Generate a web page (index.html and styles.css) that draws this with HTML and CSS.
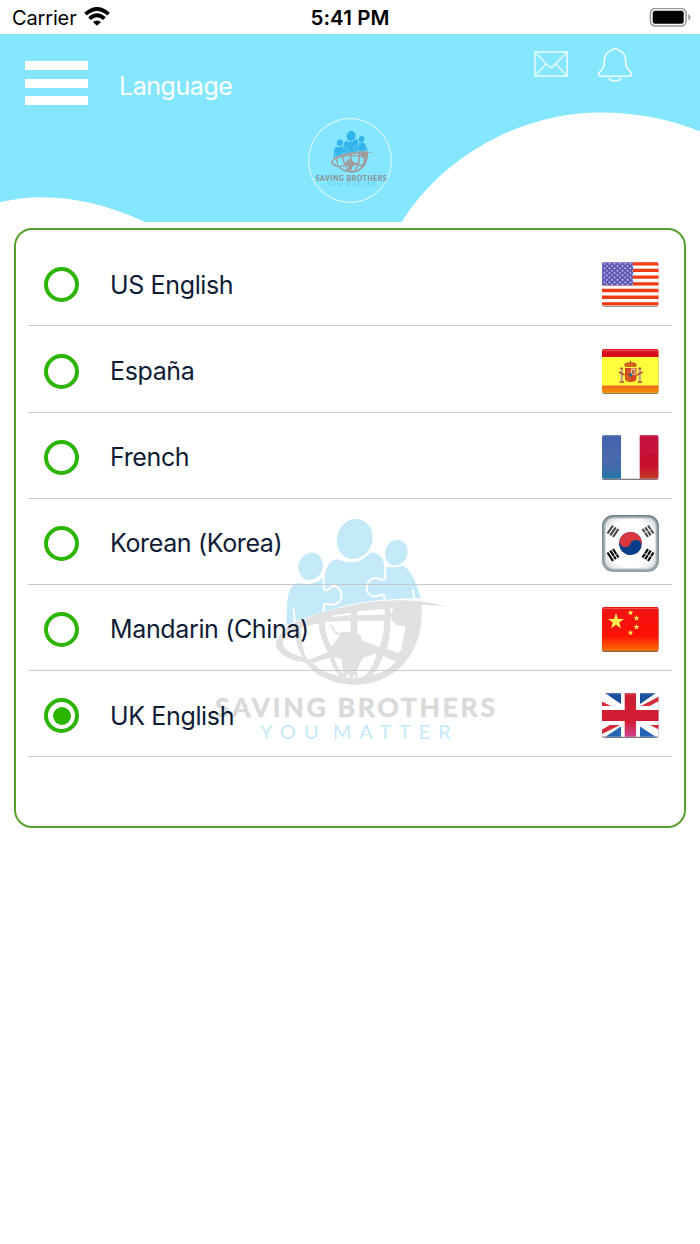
FILE: index.html
```html
<!DOCTYPE html>
<html lang="en">
<head>
<meta charset="utf-8">
<title>Language</title>
<link rel="stylesheet" href="styles.css">
</head>
<body>
<svg class="defs" width="0" height="0" aria-hidden="true">
  <defs>
    <symbol id="logo" viewBox="0 0 930 780">
      <g class="logo-blue">
        <ellipse cx="464" cy="117" rx="53" ry="61" transform="rotate(18 464 117)"/>
        <ellipse cx="332" cy="199" rx="36" ry="42" transform="rotate(20 332 199)"/>
        <ellipse cx="589" cy="158" rx="33" ry="39" transform="rotate(20 589 158)"/>
        <path d="M371 250C373 205 388 180 412 178Q465 205 512 158C540 155 556 180 553 215V299Q460 305 371 335Z"/>
        <path d="M260 376C258 270 272 250 300 250Q338 258 369 234V268C385 280 385 258 402 258C432 264 432 308 402 314C386 316 374 304 371 318V336Q310 352 260 376Z"/>
        <path d="M662 295C650 245 632 210 610 198Q585 204 557 200V237C540 246 538 230 520 235C494 242 494 286 520 289C538 292 540 278 553 286V300Q610 294 662 295Z"/>
      </g>
      <path class="logo-cut" d="M371 222V268C385 280 385 258 402 258C432 264 432 308 402 314C386 316 374 304 371 318V338M556 185V237C540 246 538 230 520 235C494 242 494 286 520 289C538 292 540 278 553 286V304M280 325L285 368M638 268L644 298"/>
      <path class="logo-grey" d="M285 368C420 310 590 280 737 318Q700 315 664 315C676 440 600 554 465 554C395 554 346 525 317 488C260 480 228 456 228 432C228 410 250 398 258 380Z"/>
      <g class="logo-hole">
        <path d="M258 408Q268 396 287 391Q284 430 308 472C252 456 236 430 258 408Z"/>
        <path d="M303 384Q330 375 355 370Q361 420 384 457L324 481Q298 440 303 384Z"/>
        <path d="M393 347L452 338V345L400 351ZM472 334L554 327V344L472 346ZM571 323L580 322L573 345Z"/>
        <path d="M374 365L452 362V399Q430 390 418 400L402 393Q410 385 388 372L397 386L402 400L420 406Q408 425 394 440Q376 408 374 365Z"/>
        <path d="M472 362H553Q552 405 539 442L484 421Q487 405 472 400Z"/>
        <path d="M572 350Q580 380 612 378Q620 385 610 412L604 450L594 460L560 447Q571 420 572 350Z"/>
        <path d="M338 489L388 473Q398 503 418 528Q365 519 338 489Z"/>
        <path d="M402 470L424 477L431 522Q411 505 402 470ZM470 513Q482 482 492 472L530 460Q522 500 495 527L474 534Z"/>
        <path d="M549 468L588 485Q562 515 517 525Q540 500 549 468ZM437 532L447 519L450 535ZM461 520L468 535H459Z"/>
      </g>
      <text class="logo-name" x="45" y="650" textLength="840">SAVING BROTHERS</text>
      <text class="logo-tag" x="180" y="717" textLength="176" lengthAdjust="spacing">YOU</text>
      <text class="logo-tag" x="398" y="717" textLength="354" lengthAdjust="spacing">MATTER</text>
    </symbol>
    <linearGradient id="cn-red" x1="0" y1="0" x2="0" y2="1">
      <stop offset="0" stop-color="#f01414"/><stop offset=".65" stop-color="#fe1005"/><stop offset="1" stop-color="#fb7200"/>
    </linearGradient>
    <linearGradient id="es-base" x1="0" y1="0" x2="0" y2="1">
      <stop offset="0" stop-color="#ed6a1c"/><stop offset="1" stop-color="#f49200"/>
    </linearGradient>
    <linearGradient id="fr-blue" x1="0" y1="0" x2="0" y2="1">
      <stop offset="0" stop-color="#3a5ca6"/><stop offset=".7" stop-color="#4468ac"/><stop offset="1" stop-color="#2478a8"/>
    </linearGradient>
    <linearGradient id="fr-red" x1="0" y1="0" x2="0" y2="1">
      <stop offset="0" stop-color="#c00838"/><stop offset=".7" stop-color="#c8102e"/><stop offset="1" stop-color="#c03c28"/>
    </linearGradient>
    <linearGradient id="uk-red" x1="0" y1="0" x2="0" y2="1">
      <stop offset="0" stop-color="#cc1f30"/><stop offset=".65" stop-color="#d41c34"/><stop offset="1" stop-color="#cc4490"/>
    </linearGradient>
    <radialGradient id="kr-face" cx=".5" cy=".5" r=".68">
      <stop offset=".7" stop-color="#fff"/><stop offset="1" stop-color="#cfd6d9"/>
    </radialGradient>
    <linearGradient id="kr-rim" x1="0" y1="0" x2="0" y2="1">
      <stop offset="0" stop-color="#6e8088"/><stop offset="1" stop-color="#98a5aa"/>
    </linearGradient>
    <pattern id="stars" width="5.200" height="4.600" patternUnits="userSpaceOnUse" x="1" y=".5">
      <circle cx="1.300" cy="1.200" r=".85" fill="#e4e2fc"/><circle cx="3.900" cy="3.500" r=".85" fill="#e4e2fc"/>
    </pattern>
    <clipPath id="flag-clip"><rect width="56.500" height="43.800" rx="2"/></clipPath>
    <path id="star" d="M0-8L1.9-2.5H7.7L3.1 1L4.8 6.6L0 3.2L-4.8 6.6L-3.1 1L-7.7-2.5H-1.9Z"/>
  </defs>
</svg>

<div class="status">
  <div class="status-left">
    <span class="carrier">Carrier</span>
    <svg class="wifi" viewBox="0 0 26 19" width="26" height="19">
      <g fill="none" stroke="#000" stroke-width="3.800">
        <path d="M1.500 7.200Q13-3.200 24.500 7.200"/>
        <path d="M5.500 11.600Q13 4.900 20.500 11.600"/>
      </g>
      <path d="M13 18.800L8.900 15.100Q13 11.700 17.100 15.100Z"/>
    </svg>
  </div>
  <span class="clock">5:41 PM</span>
  <svg class="battery" viewBox="0 0 42 20" width="42" height="20">
    <rect x="1.400" y=".5" width="35.700" height="17.600" rx="5" fill="#fff" stroke="#999" stroke-width="1.500"/>
    <rect x="3.700" y="2.800" width="31" height="13" rx="2.500"/>
    <path d="M39.300 6.100Q41.500 7.100 41.500 9.300T39.300 12.600Z" fill="#999"/>
  </svg>
</div>

<header class="header">
  <svg class="waves" viewBox="0 34 700 188" width="700" height="188">
    <path fill="#fff" d="M0 202.300C42 191.500 93 197.500 144 221.500V222H0ZM402 221.500C445 153 525 112.500 600 112.500C636 112.500 670 119 700 131.500V222H402Z"/>
  </svg>
  <div class="menu"><i></i><i></i><i></i></div>
  <h1 class="title">Language</h1>
  <div class="actions">
    <svg viewBox="0 0 34 26" width="34" height="26" fill="none" stroke="#dcf8ff" stroke-width="1.800">
      <rect x=".9" y=".9" width="32.200" height="24.200"/>
      <path d="M1 1L14.500 15Q17 17.500 19.500 15L33 1M1 25L12 13M33 25L22 13"/>
    </svg>
    <svg viewBox="0 0 36 35" width="36" height="35" fill="none" stroke="#f0fcff" stroke-width="1.600">
      <path d="M18 1.500C16 1.500 15.500 3 14 3.600C9 5.600 7.300 10 7.300 14C7.300 20 6.500 21 3 24.500C.5 27 1 29.200 4 29.200H32C35 29.200 35.500 27 33 24.500C29.500 21 28.700 20 28.700 14C28.700 10 27 5.600 22 3.600C20.500 3 20 1.500 18 1.500Z"/>
      <path d="M12 31C13.500 35 22.500 35 24 31"/>
    </svg>
  </div>
  <div class="badge"><svg class="badge-logo" width="78.300" height="65.700"><use href="#logo"/></svg></div>
</header>

<main class="card">
  <svg class="watermark" width="310" height="260"><use href="#logo"/></svg>
  <ul class="list">
    <li class="row"><span class="radio"></span><span class="name">US English</span>
      <svg class="flag" viewBox="0 0 57 45" width="57" height="45">
        <rect y="1" width="56.500" height="44" rx="2" fill="#a09898"/>
        <g clip-path="url(#flag-clip)">
          <rect width="57" height="44" fill="#fff"/>
          <path stroke="#f23a12" stroke-width="3.350" d="M0 1.700H57M0 8.400H57M0 15.100H57M0 21.800H57M0 28.500H57M0 35.200H57M0 41.900H57"/>
          <rect width="31" height="23.400" fill="#5c55b4"/><rect width="31" height="23.400" fill="url(#stars)"/>
          <path d="M0 .7H57" stroke="#fff" stroke-opacity=".25"/>
        </g>
      </svg></li>
    <li class="row"><span class="radio"></span><span class="name">España</span>
      <svg class="flag" viewBox="0 0 57 45" width="57" height="45">
        <rect y="1" width="56.500" height="44" rx="2" fill="#8a7860"/>
        <g clip-path="url(#flag-clip)">
          <rect width="57" height="44" fill="#ffff3c"/>
          <rect width="57" height="8" fill="#d80c18"/><rect x="1" y=".8" width="55" height="1.400" fill="#e85058"/>
          <rect y="36.500" width="57" height="8" fill="url(#es-base)"/>
          <path fill="#d86420" d="M23 18L22 15Q28.500 11 35 15L34 18Z"/><path stroke="#a05828" d="M28.500 11.500V15M25 13.500V16M32 13.500V16"/>
          <path fill="#d8441c" d="M23 19H34.500V29Q34.500 33 28.700 33T23 29Z"/>
          <path fill="#e8c4a0" d="M28.700 19.500H33.500V26H28.700Z"/><path fill="#d85c20" d="M23.500 26H28.700V32Q24 32 23.500 28Z"/>
          <path fill="#b06848" d="M30 21H32.500V25H30ZM25 21H27V24H25Z"/>
          <circle cx="28.700" cy="26" r="1.700" fill="#1c6c88"/>
          <path fill="#c0a888" d="M18.500 18.500H21V32.500H18.500ZM36.500 18.500H39V32.500H36.500Z"/>
          <path fill="none" stroke="#c04830" stroke-width="1.600" d="M17 23L22.500 26M40.500 23L35 26M17.500 33H22M35.500 33H40M18.500 19.500H21M36.500 19.500H39"/>
        </g>
      </svg></li>
    <li class="row"><span class="radio"></span><span class="name">French</span>
      <svg class="flag" viewBox="0 0 57 45" width="57" height="45">
        <rect y="1" width="56.500" height="44" rx="2" fill="#807880"/>
        <g clip-path="url(#flag-clip)">
          <rect width="57" height="44" fill="#fff"/><rect width="19" height="44" fill="url(#fr-blue)"/><rect x="37.700" width="19" height="44" fill="url(#fr-red)"/>
          <path d="M0 0H57V18Q28 20 0 31Z" fill="#fff" fill-opacity=".04"/><path d="M0 .7H57" stroke="#fff" stroke-opacity=".25"/>
        </g>
      </svg></li>
    <li class="row"><span class="radio"></span><span class="name">Korean (Korea)</span>
      <svg class="flag" viewBox="0 0 57 57" width="57" height="57">
        <rect width="57" height="57" rx="11" fill="url(#kr-rim)"/>
        <rect x="1.300" y="1.300" width="54.400" height="54.400" rx="10" fill="#8f9da3"/>
        <rect x="2.300" y="2.300" width="52.400" height="52.400" rx="9" fill="#b8c2c6"/>
        <rect x="3.500" y="3.500" width="50" height="50" rx="8" fill="url(#kr-face)"/>
        <g transform="rotate(22 28.500 28.500)">
          <circle cx="28.500" cy="28.500" r="11.500" fill="#073f88"/>
          <path fill="#d93840" d="M17 28.500A11.500 11.500 0 0 1 40 28.500A5.750 5.750 0 0 0 28.500 28.500A5.750 5.750 0 0 1 17 28.500Z"/>
        </g>
        <g stroke-width="2.200" fill="none">
          <path stroke="#484848" d="M5.500 18.500L11 10.500M8.300 20.300L13.800 12.300M11 22L16.500 14M46 10.500L51.500 18.500M43.200 12.300L48.700 20.300M40.500 14L46 22"/>
          <path stroke="#000" d="M5.500 37.500L11 46M8.300 35.700L13.800 44.200M11 34L16.500 42.500M46 46L51.500 37.500M43.200 44.200L48.700 35.700M40.500 42.500L46 34"/>
          <path stroke="#eee" stroke-width=".8" d="M42 18L50 14M42 38L50 42M11 42L15 39"/>
        </g>
      </svg></li>
    <li class="row"><span class="radio"></span><span class="name">Mandarin (China)</span>
      <svg class="flag" viewBox="0 0 57 45" width="57" height="45">
        <rect y="1" width="56.500" height="44" rx="2" fill="#906050"/>
        <g clip-path="url(#flag-clip)">
          <rect width="57" height="44" fill="url(#cn-red)"/><path d="M1 1.500H56" stroke="#f86060" stroke-width=".8"/>
          <g fill="#ffee50"><use href="#star" transform="translate(14 14.500) scale(1.050)"/>
          <use href="#star" transform="translate(28.500 5.800) scale(.38)"/><use href="#star" transform="translate(34.500 11.300) scale(.38)"/>
          <use href="#star" transform="translate(34.500 20) scale(.38)"/><use href="#star" transform="translate(28.500 25.700) scale(.38)"/></g>
        </g>
      </svg></li>
    <li class="row"><span class="radio checked"></span><span class="name">UK English</span>
      <svg class="flag" viewBox="0 0 57 45" width="57" height="45">
        <rect y="1" width="56.500" height="44" rx="2" fill="#807880"/>
        <g clip-path="url(#flag-clip)">
          <rect width="57" height="44" fill="#fff"/>
          <path fill="#1a4f9c" d="M3 0H19V11ZM38 0H54L38 11Z"/>
          <path fill="#2466b4" d="M19 33.500V44H3ZM38 33.500L54 44H38Z"/>
          <path fill="#d42c3c" d="M0 8.500L9 13H0ZM39 13L57 3.500V8L47.500 13ZM8 32H18L0 41V36.500ZM48 32H57V36.500Z"/>
          <path d="M0 17H22.700V0H34V17H57V28H34V44H22.700V28H0Z" fill="url(#uk-red)"/>
          <path d="M0 .8H57" stroke="#fff" stroke-opacity=".3"/>
        </g>
      </svg></li>
  </ul>
</main>
</body>
</html>
```
FILE: styles.css
```css
* { box-sizing: border-box; }
body { margin: 0; width: 700px; height: 1244px; overflow: hidden; background: #fff; font-family: Inter, "Liberation Sans", sans-serif; color: #0f1c36; }
.defs { position: absolute; }

.status { display: grid; grid-template-columns: 1fr auto 1fr; align-items: center; height: 34px; padding: 0 9px 0 12px; color: #000; }
.status-left { display: flex; align-items: center; gap: 8px; }
.carrier { font-size: 20px; line-height: 34px; padding-top: 1px; letter-spacing: -0.15px; }
.wifi { margin: 0 0 2px -0.5px; }
.clock { font-size: 20.5px; font-weight: 600; line-height: 34px; padding: 1px 3px 0 0; letter-spacing: 0.1px; }
.battery { justify-self: end; }

.header { position: relative; display: flex; align-items: flex-start; height: 187.5px; padding-left: 25px; background: #84e6ff; overflow: hidden; }
.waves { position: absolute; left: 0; top: 0; }
.menu { display: flex; flex-direction: column; gap: 8.5px; width: 63px; margin-top: 27px; }
.menu i { height: 9px; background: #fff; }
.title { margin: 36px 0 0 31px; font-size: 25px; line-height: 32px; font-weight: 400; letter-spacing: -0.45px; color: #fff; }
.actions { display: flex; align-items: center; gap: 29px; margin: 12.5px 67px 0 auto; }
.badge { position: absolute; left: 308px; top: 84px; width: 84px; height: 85px; border: 1.5px solid #e0f9ff; border-radius: 50%; padding: 7px 0 0 3px; --blue: #34b4ec; --grey: #a09c9c; --name: #8c8c90; --tag: #5cc8f0; --gap: #84e6ff; }
.badge-logo { display: block; }

.logo-blue { fill: var(--blue); }
.logo-grey { fill: var(--grey); }
.logo-hole { fill: var(--gap); }
.logo-cut { fill: none; stroke: var(--gap); stroke-width: 6; }
.logo-name { font: 700 80px Lato, sans-serif; fill: var(--name); stroke: var(--name); stroke-width: 1.5; }
.logo-tag { font: 400 60px Lato, sans-serif; fill: var(--tag); }

.card { position: relative; width: 672px; height: 600px; margin: 6.5px 14px 0; padding: 10.3px 12px 0; border: 2px solid #57a02c; border-radius: 18px; }
.watermark { position: absolute; left: 184px; top: 270px; --blue: #c4eafa; --grey: #e1e1e1; --name: #dadada; --tag: #c4eafa; --gap: #fff; }
.list { position: relative; margin: 0; padding: 0; list-style: none; }
.row { display: flex; align-items: center; height: 86.15px; padding: 4px 13px 0 16px; border-bottom: 1.5px solid #c9c9cb; }
.radio { display: flex; align-items: center; justify-content: center; width: 35px; height: 35px; border: 4px solid #2bb400; border-radius: 50%; }
.checked::after { content: ""; width: 18px; height: 18px; border-radius: 50%; background: #2bb400; }
.name { margin-left: 31px; font-size: 25px; line-height: 32px; letter-spacing: -0.36px; }
.flag { display: block; margin-left: auto; }
```
